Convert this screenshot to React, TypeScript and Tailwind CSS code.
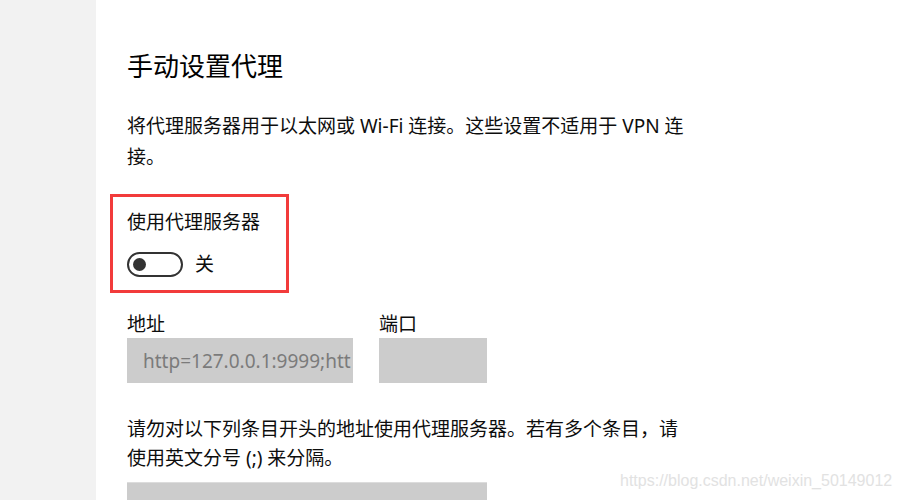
import React, { useState } from "react";

const cjk = "font-['Noto_Sans','Noto_Sans_CJK_SC',sans-serif]";

const Toggle = ({ on, onClick }: { on: boolean; onClick: () => void }) => (
  <button
    onClick={onClick}
    className={`relative w-[56px] h-[25px] rounded-full border-2 flex items-center px-[4px] ${
      on ? "bg-[#0078d7] border-[#0078d7] justify-end" : "bg-white border-[#333333] justify-start"
    }`}
  >
    <span className={`w-[13px] h-[13px] rounded-full ${on ? "bg-white" : "bg-[#333333]"}`} />
  </button>
);

const App = () => {
  const [useProxy, setUseProxy] = useState(false);
  const [address, setAddress] = useState("http=127.0.0.1:9999;https=127.0.0.1:9999");
  const [port, setPort] = useState("");

  return (
    <div className={`relative flex w-[900px] h-[500px] overflow-hidden bg-white text-[#0d0d0d] ${cjk}`}>
      {/* sidebar */}
      <div className="w-[96px] shrink-0 bg-[#f2f2f2]" />

      {/* main settings column */}
      <div className="flex flex-col pl-[31px] pt-[48px]">
        <h1 className="text-[26px] leading-[36px] font-normal text-black">手动设置代理</h1>

        <p className="mt-[27px] w-[572px] text-[19px] leading-[31px]">
          将代理服务器用于以太网或 Wi-Fi 连接。这些设置不适用于 VPN 连接。
        </p>

        {/* highlighted block */}
        <div className="mt-[21px] -ml-[17px] w-[179px] border-[3px] border-[#f23b3b] pl-[14px] pt-[11px] pb-[13px]">
          <div className="text-[19px] leading-[28px]">使用代理服务器</div>
          <div className="mt-[16px] flex items-center gap-[12px]">
            <Toggle on={useProxy} onClick={() => setUseProxy(!useProxy)} />
            <span className="text-[19px] leading-[25px]">{useProxy ? "开" : "关"}</span>
          </div>
        </div>

        <div className="mt-[19px] flex gap-[26px]">
          <div className="flex flex-col gap-[2px]">
            <span className="text-[19px] leading-[24px]">地址</span>
            <input
              value={address}
              onChange={(e) => setAddress(e.target.value)}
              disabled={!useProxy}
              className="w-[226px] h-[45px] bg-[#cccccc] pl-[16px] pr-[2px] text-[19px] text-[#7b7b7b] outline-none"
            />
          </div>
          <div className="flex flex-col gap-[2px]">
            <span className="text-[19px] leading-[24px]">端口</span>
            <input
              value={port}
              onChange={(e) => setPort(e.target.value)}
              disabled={!useProxy}
              className="w-[108px] h-[45px] bg-[#cccccc] px-[10px] text-[19px] text-[#7b7b7b] outline-none"
            />
          </div>
        </div>

        <p className="mt-[32px] w-[565px] text-[19px] leading-[29px]">
          请勿对以下列条目开头的地址使用代理服务器。若有多个条目，请使用英文分号 (;) 来分隔。
        </p>

        <div className="mt-[9px] w-[360px] h-[45px] bg-[#cccccc] border-t border-[#dcdcdc]" />
      </div>

      {/* watermark */}
      <span className="absolute left-[620px] top-[470px] text-[16px] leading-[22px] text-[#e2e2e2] font-['Liberation_Sans',sans-serif]">
        https://blog.csdn.net/weixin_50149012
      </span>
    </div>
  );
};

export default App;
